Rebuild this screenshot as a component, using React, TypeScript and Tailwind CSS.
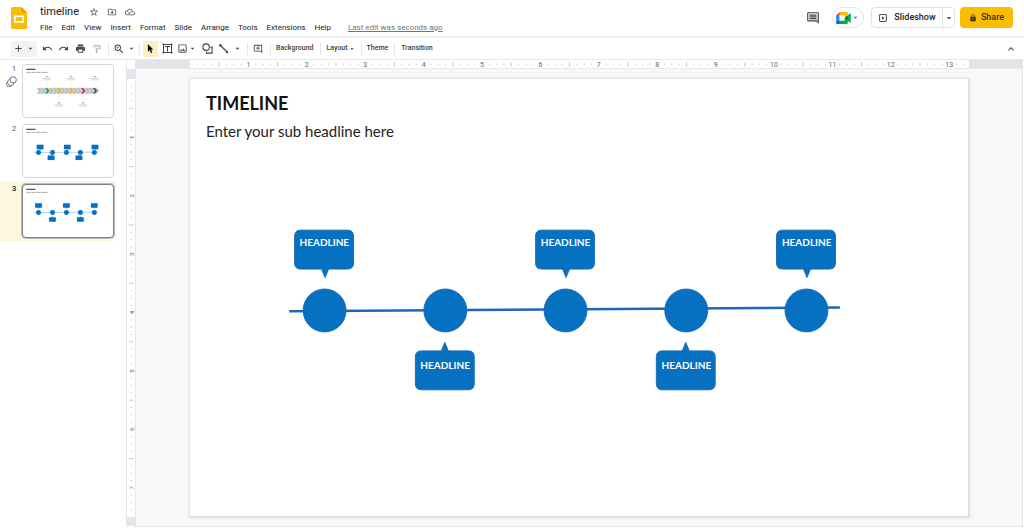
import React from "react";
import type { ReactNode } from "react";
import {
  MdAdd,
  MdArrowDropDown,
  MdKeyboardArrowUp,
  MdLock,
  MdOutlineAddComment,
  MdOutlineCloudDone,
  MdOutlineComment,
  MdOutlineDriveFileMove,
  MdOutlineFormatPaint,
  MdOutlineImage,
  MdOutlineSlideshow,
  MdPrint,
  MdRedo,
  MdStarBorder,
  MdUndo,
  MdZoomIn,
} from "react-icons/md";

const MENUS = ["File", "Edit", "View", "Insert", "Format", "Slide", "Arrange", "Tools", "Extensions", "Help"];

const INCH = 58.4;

function SlidesLogo() {
  return (
    <svg viewBox="0 0 16 22" className="h-[22px] w-4 shrink-0" aria-hidden="true">
      <path d="M1.5 0H10.5L16 5.5V20.5A1.5 1.5 0 0 1 14.5 22H1.5A1.5 1.5 0 0 1 0 20.5V1.5A1.5 1.5 0 0 1 1.5 0Z" fill="#fbbc04" />
      <path d="M10.5 0L16 5.5H10.5Z" fill="#f29900" />
      <rect x="3.8" y="9.3" width="8.4" height="5.6" fill="none" stroke="#fff" strokeWidth="1.7" />
    </svg>
  );
}

function MeetIcon() {
  return (
    <svg viewBox="0 0 87.5 72" className="h-3 w-[15px]" aria-hidden="true">
      <path fill="#00832d" d="M49.5 36l8.53 9.75 11.47 7.33 2-17.02-2-16.64-11.69 6.44z" />
      <path fill="#0066da" d="M0 51.5V66c0 3.315 2.685 6 6 6h14.5l3-10.96-3-9.54-9.95-3z" />
      <path fill="#e94235" d="M20.5 0L0 20.5l10.55 3 9.95-3 2.95-9.41z" />
      <path fill="#2684fc" d="M20.5 20.5H0v31h20.5z" />
      <path fill="#00ac47" d="M82.6 8.68L69.5 19.42v33.66l13.16 10.79c1.97 1.54 4.85.135 4.85-2.37V11c0-2.535-2.945-3.925-4.91-2.32zM49.5 36v15.5h-29V72h43c3.315 0 6-2.685 6-6V53.08z" />
      <path fill="#ffba00" d="M63.5 0h-43v20.5h29V36l20-16.57V6c0-3.315-2.685-6-6-6z" />
      <path fill="#fff" d="M20.5 20.5h29v31h-29z" />
    </svg>
  );
}

function ToolButton({ label, children, tone = "" }: { label: string; children: ReactNode; tone?: string }) {
  return (
    <button type="button" aria-label={label} className={`flex h-4 shrink-0 items-center justify-center ${tone}`}>
      {children}
    </button>
  );
}

function Divider({ className = "" }: { className?: string }) {
  return <span className={`h-3 w-px shrink-0 bg-[#e3e5e8] ${className}`} />;
}

function Header() {
  return (
    <header className="flex h-9 items-start justify-between pr-[11px] pl-[11px]">
      <div className="flex items-start gap-[13px] pt-[7px]">
        <SlidesLogo />
        <div className="-mt-px">
          <div className="flex h-3 items-center gap-2 text-[#50555a]">
            <h1 className="mr-0.5 text-[11px] leading-3 text-[#202124]">timeline</h1>
            <button type="button" aria-label="Star"><MdStarBorder size={10} /></button>
            <button type="button" aria-label="Move"><MdOutlineDriveFileMove size={10} /></button>
            <button type="button" aria-label="Document status"><MdOutlineCloudDone size={10} /></button>
          </div>
          <nav className="mt-1 flex items-center gap-[9px] text-[8px] leading-3 text-[#202124]">
            {MENUS.map((m) => (
              <button type="button" key={m}>{m}</button>
            ))}
            <a href="#history" className="ml-2 text-[#70757a] underline">Last edit was seconds ago</a>
          </nav>
        </div>
      </div>
      <div className="flex items-center pt-[7px] text-[#3c4043]">
        <button type="button" aria-label="Comments" className="mr-3"><MdOutlineComment size={14} /></button>
        <button type="button" aria-label="Join a call" className="mr-[7px] flex h-[21px] w-8 items-center justify-center rounded-full border border-[#e1e3e6]">
          <MeetIcon />
          <MdArrowDropDown size={9} className="text-[#1a73e8]" />
        </button>
        <div className="mr-[5px] flex h-[21px] rounded-sm border border-[#dfe1e5] text-[9px] font-medium text-[#202124]">
          <button type="button" className="flex w-[70px] items-center justify-center gap-1.5">
            <MdOutlineSlideshow size={10} />
            Slideshow
          </button>
          <button type="button" aria-label="Slideshow options" className="flex w-3 items-center justify-center border-l border-[#dfe1e5]">
            <MdArrowDropDown size={10} />
          </button>
        </div>
        <button type="button" className="flex h-[21px] w-[53px] items-center justify-center gap-1 rounded-sm bg-[#fbbc04] text-[9px] font-medium text-[#3a2f10]">
          <MdLock size={8} />
          Share
        </button>
      </div>
    </header>
  );
}

function Toolbar() {
  return (
    <div className="flex h-6 items-center border-t-2 border-b border-t-[#eff0f2] border-b-[#e6e8ea] pr-[7px] pl-[11px] text-[#444746]">
      <ToolButton label="New slide" tone="w-[26px] gap-0.5 bg-[#f1f3f4]">
        <MdAdd size={11} />
        <MdArrowDropDown size={9} />
      </ToolButton>
      <ToolButton label="Undo" tone="ml-0.5 w-4"><MdUndo size={11} /></ToolButton>
      <ToolButton label="Redo" tone="w-[17px]"><MdRedo size={11} /></ToolButton>
      <ToolButton label="Print" tone="w-4"><MdPrint size={11} /></ToolButton>
      <ToolButton label="Paint format" tone="w-[17px] text-[#b8babd]"><MdOutlineFormatPaint size={10} /></ToolButton>
      <Divider className="mx-[3px]" />
      <ToolButton label="Zoom" tone="w-6 gap-0.5">
        <MdZoomIn size={12} />
        <MdArrowDropDown size={9} />
      </ToolButton>
      <Divider className="mx-[3px]" />
      <ToolButton label="Select" tone="w-[15px] bg-[#feefc3] text-black">
        <svg viewBox="0 0 8 11" className="h-[10px] w-[7px]" aria-hidden="true">
          <path d="M1 0V8.5L3 6.7L4.5 10.2L6 9.5L4.5 6.2H7.2Z" fill="currentColor" />
        </svg>
      </ToolButton>
      <ToolButton label="Text box" tone="w-[18px]">
        <svg viewBox="0 0 11 11" className="h-[11px] w-[11px]" fill="none" stroke="currentColor" aria-hidden="true">
          <path d="M1.5 1.5H9.5V9.5H1.5ZM3 3.5H8M5.5 3.5V8.5" />
          <path d="M.5 .5h1.500v1.500H.5zM9 .5h1.500v1.500H9zM.5 9h1.500v1.500H.5zM9 9h1.500v1.500H9z" fill="currentColor" stroke="none" />
        </svg>
      </ToolButton>
      <ToolButton label="Image" tone="w-[22px]">
        <MdOutlineImage size={11} />
        <MdArrowDropDown size={9} />
      </ToolButton>
      <ToolButton label="Shape" tone="w-[18px]">
        <svg viewBox="0 0 12 12" className="h-[11px] w-[11px]" fill="none" stroke="currentColor" strokeWidth="1.2" aria-hidden="true">
          <circle cx="4.5" cy="4.5" r="3.5" />
          <path d="M9.2 4.5H11V11H4.8V9.4" />
        </svg>
      </ToolButton>
      <ToolButton label="Line" tone="w-7 gap-1">
        <svg viewBox="0 0 12 12" className="h-[11px] w-[11px]" aria-hidden="true">
          <path d="M2.5 2.5L10 10" stroke="currentColor" strokeWidth="1.4" />
          <circle cx="2.5" cy="2.5" r="1.3" fill="currentColor" />
          <circle cx="9.8" cy="9.8" r="1.3" fill="currentColor" />
        </svg>
        <MdArrowDropDown size={9} />
      </ToolButton>
      <Divider className="mx-[3px]" />
      <ToolButton label="Add comment" tone="w-[14px]"><MdOutlineAddComment size={10} /></ToolButton>
      <Divider className="mx-[5px]" />
      <div className="flex items-center text-[7px] font-medium text-[#3c4043]">
        <button type="button">Background</button>
        <Divider className="mx-1.5" />
        <button type="button" className="flex items-center">Layout<MdArrowDropDown size={8} /></button>
        <Divider className="mx-[5px]" />
        <button type="button">Theme</button>
        <Divider className="mx-1.5" />
        <button type="button">Transition</button>
      </div>
      <button type="button" aria-label="Hide the menus" className="ml-auto"><MdKeyboardArrowUp size={12} /></button>
    </div>
  );
}

const NODES = [134.5, 255.5, 376, 497, 617.5];

function TimelineShapes({ offsets = [0, 0, 0, 0, 0], near = 0 }: { offsets?: number[]; near?: number }) {
  return (
    <g fill="#0670c1" stroke="#1d6bb8" strokeWidth="1">
      <path d="M99 232.8L651 229" stroke="#1b68ba" strokeWidth="2.5" />
      {NODES.map((x) => (
        <circle key={x} cx={x} cy="232" r="21.5" />
      ))}
      {NODES.map((x, i) =>
        i % 2 === 0 ? (
          <path
            key={x}
            transform={`translate(${x - 0.5 + offsets[i]} ${near})`}
            d="M-23.5 151.5H23.5Q29.5 151.5 29.5 157.5V184.5Q29.5 190.5 23.5 190.5H4.5L1 199L-2.5 190.5H-23.5Q-29.5 190.5 -29.5 184.5V157.5Q-29.5 151.5 -23.5 151.5Z"
          />
        ) : (
          <path
            key={x}
            transform={`translate(${x - 0.5 + offsets[i]} ${-near})`}
            d="M-23.5 272.5H-3.5L0 264L3.5 272.5H23.5Q29.5 272.5 29.5 278.5V305.5Q29.5 311.5 23.5 311.5H-23.5Q-29.5 311.5 -29.5 305.5V278.5Q-29.5 272.5 -23.5 272.5Z"
          />
        ),
      )}
    </g>
  );
}

const ARROWS = ["#16a34a", "#eab308", "#f5ad0b", "#d7263d", "#4b4b4f"];

function ArrowShapes() {
  return (
    <g>
      <path d="M118 190H640L666 216L640 242H118L136 216Z" fill="#d2d2d4" />
      {Array.from({ length: 15 }, (_, i) => (
        <path
          key={i}
          transform={`translate(${122 + i * 34.5} 192)`}
          d="M0 0H18L38 24L18 48H0L20 24Z"
          fill={i % 3 === 2 ? ARROWS[(i - 2) / 3] : "#bdbdc0"}
        />
      ))}
      {[208, 312, 416, 520, 622].map((x, i) => {
        const y = i % 2 === 0 ? 95 : 322;
        return (
          <g key={x} fill="none" stroke="#a5a7aa">
            <path d={i % 2 === 0 ? `M${x} 140V190` : `M${x} 242V310`} strokeWidth="3" stroke="#dddddd" />
            <path d={`M${x - 12} ${y}H${x + 12}`} strokeWidth="6" stroke="#777777" />
            <path d={`M${x - 36} ${y + 16}H${x + 36}M${x - 30} ${y + 28}H${x + 30}`} strokeWidth="4" />
          </g>
        );
      })}
    </g>
  );
}

function Thumbnail({ index, selected = false, children }: { index: number; selected?: boolean; children: ReactNode }) {
  return (
    <li className={`flex w-[116px] items-start py-[3px] ${selected ? "bg-[#fef7e0]" : ""}`}>
      <div className="flex w-[22px] shrink-0 flex-col items-center text-[8px] leading-[9px] text-[#5f6368]">
        <span className={`ml-1.5 ${selected ? "font-bold text-[#3c4043]" : ""}`}>{index}</span>
        {index === 1 && (
          <svg viewBox="0 0 12 12" className="mt-[3px] h-[11px] w-[11px]" fill="none" stroke="#5f6368" strokeWidth="1" aria-label="Has animation">
            <circle cx="7.8" cy="4.2" r="3.5" />
            <path d="M4.6 2.8L2.3 5.1A3.5 3.5 0 0 0 7.2 9.9L9.3 7.6" />
            <path d="M2.3 6.2L1.2 7.3A2.6 2.6 0 0 0 4.9 11L6 10" />
          </svg>
        )}
      </div>
      <button
        type="button"
        aria-label={`Slide ${index}`}
        className={`h-[54px] w-[92px] overflow-hidden rounded border bg-white ${selected ? "border-[#7d8085] ring-1 ring-[#b9bbbf]" : "border-[#d5d7da]"}`}
      >
        <svg viewBox="0 0 779 438" className="block h-full w-full" aria-hidden="true">
          <path d="M28 32H108" stroke="#555555" strokeWidth="11" />
          <path d="M28 58H218" stroke="#999999" strokeWidth="7" strokeDasharray="38 6" />
          {children}
        </svg>
      </button>
    </li>
  );
}

function Filmstrip() {
  return (
    <aside className="w-[127px] shrink-0 border-r border-[#e4e6e9]">
      <ol className="flex flex-col pt-px">
        <Thumbnail index={1}><ArrowShapes /></Thumbnail>
        <Thumbnail index={2}><TimelineShapes offsets={[14, -12, 8, -12, 6]} near={14} /></Thumbnail>
        <Thumbnail index={3} selected><TimelineShapes /></Thumbnail>
      </ol>
    </aside>
  );
}

function HorizontalRuler() {
  const ticks = Array.from({ length: 106 }, (_, i) => i + 1);
  return (
    <div className="flex h-[9px] border-b border-[#e8eaec]">
      <span className="w-[54px] bg-[#e1e4e8]" />
      <svg viewBox="0 0 779 8" className="h-2 flex-1 bg-white" aria-hidden="true">
        {ticks.map((t) => {
          const x = (t * INCH) / 8;
          if (t % 8 === 0)
            return (
              <text key={t} x={x} y="6.5" fontSize="7" textAnchor="middle" fill="#5f6368">
                {t / 8}
              </text>
            );
          return <path key={t} d={t % 4 === 0 ? `M${x} 2V6.5` : `M${x} 3.5V5`} stroke="#c4c7ca" strokeWidth="1" />;
        })}
      </svg>
      <span className="w-[53px] bg-[#e1e4e8]" />
    </div>
  );
}

function VerticalRuler() {
  const ticks = Array.from({ length: 59 }, (_, i) => i + 1);
  return (
    <div className="flex w-[9px] shrink-0 flex-col border-r border-[#e4e6e9]">
      <span className="h-[9px]" />
      <span className="h-[10px] bg-[#e1e4e8]" />
      <svg viewBox="0 0 8 438" className="h-[438px] w-2 bg-white" aria-hidden="true">
        {ticks.map((t) => {
          const y = (t * INCH) / 8;
          if (t % 8 === 0)
            return (
              <text key={t} transform={`translate(6.5 ${y}) rotate(-90)`} fontSize="6" textAnchor="middle" fill="#5f6368">
                {t / 8}
              </text>
            );
          return <path key={t} d={t % 4 === 0 ? `M2 ${y}H6.5` : `M3.5 ${y}H5`} stroke="#c4c7ca" strokeWidth="1" />;
        })}
      </svg>
      <span className="h-[9px] bg-[#e1e4e8]" />
    </div>
  );
}

function SlideCanvas() {
  return (
    <section className="relative aspect-[779/438] border-r border-b border-[#d9dbdd] bg-white font-['Lato','Liberation_Sans',sans-serif] shadow-[0_0_2px_1px_#dcdee0]">
      <div className="px-4 pt-3 text-[#111111]">
        <h2 className="text-[18px] leading-6 font-bold">TIMELINE</h2>
        <p className="mt-1 text-[15px] leading-6 text-[#222222]">Enter your sub headline here</p>
      </div>
      <svg viewBox="0 0 779 438" className="absolute inset-0 h-full w-full" aria-hidden="true">
        <TimelineShapes />
      </svg>
      {NODES.map((x, i) => (
        <span
          key={x}
          style={{ left: `${(x / 779) * 100}%` }}
          className={`absolute -translate-x-1/2 text-[10px] leading-3 font-bold text-white ${i % 2 === 0 ? "top-[36%]" : "top-[64%]"}`}
        >
          HEADLINE
        </span>
      ))}
    </section>
  );
}

export default function App() {
  return (
    <div className="flex min-h-screen flex-col bg-white font-['Roboto','Liberation_Sans',sans-serif]">
      <Header />
      <Toolbar />
      <main className="flex flex-1">
        <Filmstrip />
        <VerticalRuler />
        <div className="mr-px flex min-w-0 flex-1 flex-col border-r border-[#e4e6e9] bg-[#f7f8f8]">
          <HorizontalRuler />
          <div className="pt-[10px] pr-[53px] pb-[9px] pl-[54px]">
            <SlideCanvas />
          </div>
          <div className="flex-1 border-t border-[#e4e6e9] bg-white" />
        </div>
      </main>
    </div>
  );
}
